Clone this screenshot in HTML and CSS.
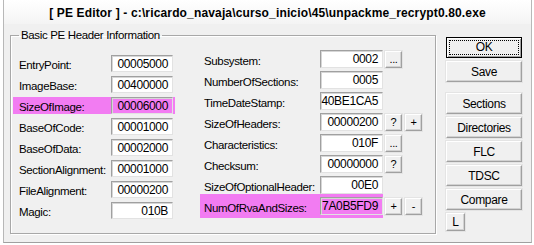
FILE: index.html
```html
<!DOCTYPE html>
<html lang="en">
<head>
    <meta charset="UTF-8">
    <title>[ PE Editor ]</title>
    <link rel="stylesheet" href="styles.css">
</head>
<body>
    <div class="window">
        <div class="titlebar">[ PE Editor ] - c:\ricardo_navaja\curso_inicio\45\unpackme_recrypt0.80.exe</div>
        <div class="client">
            <fieldset class="group">
                <legend>Basic PE Header Information</legend>
                <div class="cols">
                    <div class="col-left">
                        <div class="row"><span class="lbl">EntryPoint:</span><span class="field">00005000</span></div>
                        <div class="row"><span class="lbl">ImageBase:</span><span class="field">00400000</span></div>
                        <div class="row hl"><span class="lbl">SizeOfImage:</span><span class="field">00006000</span></div>
                        <div class="row"><span class="lbl">BaseOfCode:</span><span class="field">00001000</span></div>
                        <div class="row"><span class="lbl">BaseOfData:</span><span class="field">00002000</span></div>
                        <div class="row"><span class="lbl">SectionAlignment:</span><span class="field">00001000</span></div>
                        <div class="row"><span class="lbl">FileAlignment:</span><span class="field">00000200</span></div>
                        <div class="row"><span class="lbl">Magic:</span><span class="field">010B</span></div>
                    </div>
                    <div class="col-mid">
                        <div class="mrow"><span class="cell"><span class="lbl">Subsystem:</span><span class="field">0002</span></span><button class="sbtn">...</button></div>
                        <div class="mrow"><span class="cell"><span class="lbl">NumberOfSections:</span><span class="field">0005</span></span></div>
                        <div class="mrow"><span class="cell"><span class="lbl">TimeDateStamp:</span><span class="field">40BE1CA5</span></span></div>
                        <div class="mrow"><span class="cell"><span class="lbl">SizeOfHeaders:</span><span class="field">00000200</span></span><button class="sbtn">?</button><button class="sbtn">+</button></div>
                        <div class="mrow"><span class="cell"><span class="lbl">Characteristics:</span><span class="field">010F</span></span><button class="sbtn">...</button></div>
                        <div class="mrow"><span class="cell"><span class="lbl">Checksum:</span><span class="field">00000000</span></span><button class="sbtn">?</button></div>
                        <div class="mrow"><span class="cell"><span class="lbl">SizeOfOptionalHeader:</span><span class="field">00E0</span></span></div>
                        <div class="mrow"><span class="cell hl tall"><span class="lbl">NumOfRvaAndSizes:</span><span class="field">7A0B5FD9</span></span><button class="sbtn">+</button><button class="sbtn">-</button></div>
                    </div>
                </div>
            </fieldset>
            <div class="buttons">
                <button class="btn default"><span class="focus">OK</span></button>
                <button class="btn">Save</button>
                <button class="btn gap">Sections</button>
                <button class="btn">Directories</button>
                <button class="btn">FLC</button>
                <button class="btn">TDSC</button>
                <button class="btn">Compare</button>
                <button class="btn small">L</button>
            </div>
        </div>
    </div>
</body>
</html>
```

FILE: styles.css
```css
body {
    margin: 0;
    font-family: "Liberation Sans", Arial, sans-serif;
    font-size: 11.5px;
    letter-spacing: -0.35px;
    color: #000;
}
.window {
    box-sizing: border-box;
    width: 529px;
    height: 243px;
    margin-left: 3px;
    background: #f0f0f0;
    border-left: 1px solid #b8b8b8;
    border-right: 1px solid #b8b8b8;
    border-bottom: 1px solid #a0a0a0;
}
.titlebar {
    height: 24px;
    line-height: 27px;
    text-align: center;
    font-weight: bold;
    font-size: 12px;
    letter-spacing: 0.15px;
    background: linear-gradient(#ffffff, #f4f4f4);
}
.client {
    display: flex;
    padding: 4px 0 0 6px;
}
.group {
    margin: 0;
    padding: 0;
    width: 426px;
    height: 206px;
    box-sizing: border-box;
    border: 1px solid #a8a8a8;
    box-shadow: inset 1px 1px 0 #fff, 1px 1px 0 #fff;
}
.group legend {
    margin-left: 8px;
    padding: 0 2px;
    line-height: 14px;
    font-size: 11.5px;
}
.cols {
    display: flex;
}
.col-left {
    margin: 13px 0 0 2px;
    width: 162px;
    display: flex;
    flex-direction: column;
    gap: 4px;
}
.row {
    display: flex;
    align-items: center;
    height: 17px;
    padding: 0 2px 0 6px;
}
.row .lbl {
    width: 92px;
}
.lbl {
    white-space: nowrap;
    padding-top: 3px;
}
.field {
    box-sizing: border-box;
    height: 17px;
    width: 62px;
    background: #fff;
    text-align: right;
    padding: 1px 4px 0 0;
    line-height: 15px;
    font-size: 12px;
    border: 1px solid;
    border-color: #a0a0a0 #e2e2e2 #e2e2e2 #a0a0a0;
    box-shadow: inset 1px 1px 0 #d6d6d6;
}
.hl, .hl .field {
    background: #f27cf2;
}
.col-mid {
    margin: 8px 0 0 25px;
    display: flex;
    flex-direction: column;
    gap: 3px;
}
.mrow {
    display: flex;
    align-items: center;
    height: 18px;
    gap: 2px;
}
.cell {
    display: flex;
    align-items: center;
    height: 18px;
    padding-left: 4px;
}
.cell .lbl {
    width: 116px;
}
.cell .field {
    width: 63px;
    height: 18px;
}
.cell.tall {
    height: 24px;
}
.sbtn, .btn {
    font-family: inherit;
    letter-spacing: inherit;
    color: #000;
    background: #f0f0f0;
    border: 1px solid;
    border-color: #fff #a0a0a0 #a0a0a0 #fff;
    box-shadow: inset -1px -1px 0 #d2d2d2, 0 0 0 1px #e4e4e4;
    padding: 0;
    margin: 0;
}
.sbtn {
    width: 17px;
    height: 17px;
    font-size: 11px;
    line-height: 13px;
}
.sbtn + .sbtn {
    margin-left: 1px;
}
.buttons {
    margin: 9px 0 0 10px;
    display: flex;
    flex-direction: column;
    gap: 3px;
}
.btn {
    width: 76px;
    height: 21px;
    font-size: 12px;
}
.btn.gap {
    margin-top: 8px;
}
.btn.default {
    border: 1px solid #000;
    box-shadow: inset 1px 1px 0 #fff, inset -1px -1px 0 #a0a0a0;
    padding: 2px;
}
.focus {
    display: block;
    height: 100%;
    box-sizing: border-box;
    border: 1px dotted #000;
    line-height: 13px;
}
.btn.small {
    width: 19px;
    height: 18px;
}
```
